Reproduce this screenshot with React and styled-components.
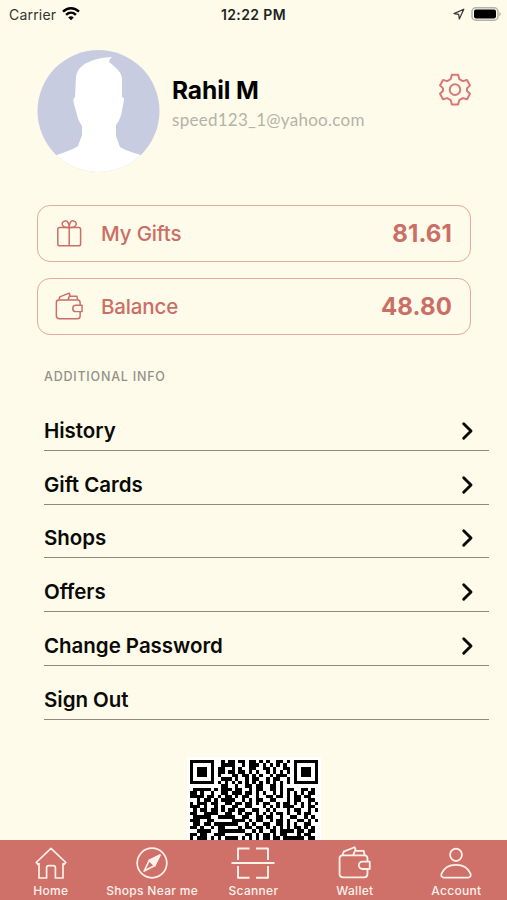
import React from 'react';
import styled, { createGlobalStyle } from 'styled-components';

const GlobalStyles = createGlobalStyle`
  * {
    box-sizing: border-box;
  }
  body {
    margin: 0;
    background-color: #fefbea;
    font-family: Inter, 'Liberation Sans', sans-serif;
  }
`;

const Screen = styled.div`
  display: flex;
  flex-direction: column;
  width: 507px;
  height: 900px;
  overflow: hidden;
  background-color: #fefbea;
`;

const StatusBar = styled.header`
  display: grid;
  grid-template-columns: 1fr auto 1fr;
  align-items: center;
  flex: none;
  height: 28px;
  padding: 0 6px 0 9px;
  font-size: 14px;
  letter-spacing: 0.2px;
  color: #333;
`;

const StatusGroup = styled.div`
  display: flex;
  align-items: center;
  gap: ${(p) => p.$gap}px;
  justify-content: ${(p) => (p.$end ? 'flex-end' : 'flex-start')};
`;

const Clock = styled.div`
  padding-right: 3px;
  font-size: 14px;
  font-weight: 600;
  letter-spacing: 0.4px;
  color: #222;
`;

const Content = styled.main`
  display: flex;
  flex-direction: column;
  flex: 1;
  min-height: 0;
  overflow: hidden;
`;

const Profile = styled.section`
  display: flex;
  flex: none;
  height: 177px;
  padding: 21px 36px 0 37px;
`;

const Avatar = styled.svg`
  flex: none;
  width: 123px;
  height: 123px;
`;

const Person = styled.div`
  flex: 1;
  padding: 26px 0 0 12px;
`;

const Name = styled.h1`
  margin: 0;
  font-size: 24.5px;
  line-height: 30px;
  font-weight: 650;
  letter-spacing: -0.1px;
  color: #000;
`;

const Email = styled.div`
  margin-top: 4px;
  font-family: Lato, sans-serif;
  font-size: 17px;
  line-height: 22px;
  letter-spacing: 0.27px;
  color: #b4b3a8;
`;

const SettingsButton = styled.button`
  align-self: flex-start;
  margin-top: 24px;
  padding: 0;
  border: 0;
  background: none;
  color: #d97777;
  line-height: 0;
`;

const Cards = styled.section`
  display: flex;
  flex-direction: column;
  flex: none;
  gap: 16px;
  padding: 0 36px 0 37px;
`;

const Card = styled.div`
  display: flex;
  align-items: center;
  height: 57px;
  padding: 0 18px 0 17px;
  border: 1px solid #e3a9a4;
  border-radius: 13px;
  color: #cb6e66;
`;

const CardIcon = styled.span`
  display: flex;
  width: 30px;
`;

const CardLabel = styled.span`
  flex: 1;
  padding-left: 16px;
  font-size: 20.5px;
  font-weight: 550;
  letter-spacing: -0.15px;
`;

const Amount = styled.span`
  font-size: 24px;
  font-weight: 650;
  letter-spacing: 0.1px;
`;

const SectionTitle = styled.h2`
  flex: none;
  margin: 33px 0 0 44px;
  height: 29px;
  font-size: 12.5px;
  line-height: 18px;
  font-weight: 550;
  letter-spacing: 0.78px;
  color: #929187;
`;

const Menu = styled.nav`
  flex: none;
  padding: 0 18px 0 44px;
`;

const MenuItem = styled.div`
  display: flex;
  justify-content: space-between;
  align-items: flex-end;
  height: 53.8px;
  padding: 0 16px 5px 0;
  border-bottom: 1.5px solid #8c8a81;
  font-size: 20.5px;
  line-height: 28px;
  font-weight: 600;
  letter-spacing: -0.03px;
  color: #0a0a08;
`;

const Chevron = styled.span`
  display: flex;
  align-items: center;
  height: 28px;
`;

const Code = styled.div`
  align-self: center;
  flex: none;
  margin: 37px 0 0 1px;
  padding: 3px;
  background-color: #fff;
  line-height: 0;
`;

const TabBar = styled.footer`
  display: grid;
  grid-template-columns: repeat(5, 1fr);
  flex: none;
  height: 60px;
  background-color: #cf7069;
`;

const Tab = styled.div`
  display: flex;
  flex-direction: column;
  align-items: center;
  padding: 6px 0 0;
  color: #fff2e9;
`;

const TabLabel = styled.span`
  margin-top: 3px;
  font-size: 12px;
  line-height: 16px;
  font-weight: 500;
  letter-spacing: 0.3px;
  white-space: nowrap;
`;

const Icon = styled.svg`
  flex: none;
  overflow: visible;
  fill: none;
  stroke: currentColor;
  stroke-width: ${(p) => p.$stroke || 1.5};
  stroke-linejoin: round;
`;

function WifiIcon() {
  return (
    <Icon width="18" height="14" viewBox="0 0 18 14" $stroke={2.5} color="#000">
      <path d="M1 4.7C5.6 .1 12.4.1 17 4.7M4.1 7.9C7 5.1 11 5.1 13.9 7.9" />
      <path d="M6.2 10.4Q9 8 11.8 10.4L9 13.2z" fill="currentColor" stroke="none" />
    </Icon>
  );
}

function LocationIcon() {
  return (
    <Icon width="12" height="12" viewBox="0 0 12 12" $stroke={1.2}>
      <path d="M10.8 1.2L1 5.6 5.7 6.3 6.3 11z" />
    </Icon>
  );
}

function BatteryIcon() {
  return (
    <Icon width="30" height="14" viewBox="0 0 30 14" $stroke={1.5}>
      <rect x="1" y=".8" width="26" height="12.4" rx="3.8" stroke="#b5b3a9" />
      <rect x="3" y="2.6" width="22" height="8.8" rx="1.8" fill="#000" stroke="none" />
      <path d="M28.4 4.7v4.6q3-2.3 0-4.6" fill="#b5b3a9" stroke="none" />
    </Icon>
  );
}

function GearIcon() {
  return (
    <Icon width="32" height="33" viewBox="0 0 32 33" $stroke={2}>
      <path d="M12.9 1.8H19.1L20.3 6.1 23.8 8.1 28 7 31 12.4 28 15.4V17.8L31 20.8 28 26.2 23.8 25.1 20.3 27.1 19.1 31.4H12.9L11.7 27.1 8.2 25.1 4 26.2 1 20.8 4 17.8V15.4L1 12.4 4 7 8.2 8.1 11.7 6.1z" />
      <circle cx="16" cy="16.6" r="5.3" />
    </Icon>
  );
}

function GiftIcon() {
  return (
    <Icon width="30" height="30" viewBox="0 0 30 30" $stroke={1.5}>
      <rect x="2.8" y="8.4" width="22.8" height="18.4" rx="1.8" />
      <path d="M14.2 8.4V26.8" />
      <path d="M14.2 8.2C9.5 9.1 6.5 6.8 7.2 4.2 7.9 1.6 11.8.9 13 3.4 13.7 4.8 14.2 6.6 14.2 8.2zM14.2 8.2C18.9 9.1 21.9 6.8 21.2 4.2 20.5 1.6 16.6.9 15.4 3.4 14.7 4.8 14.2 6.6 14.2 8.2z" />
    </Icon>
  );
}

function WalletIcon({ size, stroke }) {
  return (
    <Icon width={size} height={size} viewBox="0 0 30 30" $stroke={stroke}>
      <path d="M26 13.8V11Q26 8.2 23.3 8.2H4Q1.4 8.2 1.4 10.8V24.5Q1.4 27.7 4.6 27.7H23Q26 27.7 26 24.8V20.3" />
      <path d="M28 13.8H21.6A3.25 3.25 0 0 0 21.6 20.3H28Z" />
      <path d="M4 8.2L5 5 14.6 1.1 15.5 2.9 13.5 8.2M14.6 4.3H22.7L23.5 8.2M15 4.3Q14 6 13.5 8.2" />
    </Icon>
  );
}

function ChevronIcon() {
  return (
    <Icon width="11" height="18" viewBox="0 0 11 18" $stroke={2.9}>
      <path d="M1.7 1.7L9 9 1.7 16.3" strokeLinecap="round" />
    </Icon>
  );
}

function HomeIcon() {
  return (
    <Icon width="32" height="34" viewBox="0 0 32 34" $stroke={1.7}>
      <path d="M1.2 16.5L16 2.4 30.8 16.5 29 18.4 28 17.7V32H20.4V21.8Q20.4 19.6 18.3 19.6H13.7Q11.6 19.6 11.6 21.8V32H4V17.7L3 18.4z" />
    </Icon>
  );
}

function CompassIcon() {
  return (
    <Icon width="32" height="34" viewBox="0 0 32 34" $stroke={1.7}>
      <circle cx="16" cy="17" r="14.8" />
      <path d="M23.8 9.2L18.7 19.5 8.2 25.1 13.2 14.5z" />
      <path d="M23.8 9.2L18.7 19.5 13.2 14.5z" fill="currentColor" />
    </Icon>
  );
}

function ScannerIcon() {
  return (
    <Icon width="44" height="34" viewBox="0 0 44 34" $stroke={1.9}>
      <path d="M18.5 2.5H7V14M25 2.5H37V14M7 20V31.7H18.5M37 20V31.7H25" />
      <path d="M.5 17H43.5" />
    </Icon>
  );
}

function AccountIcon() {
  return (
    <Icon width="32" height="34" viewBox="0 0 32 34" $stroke={1.8}>
      <ellipse cx="16" cy="8.8" rx="5.9" ry="6.2" />
      <path d="M4 31.7C1.5 31.7.8 29.8 1.6 27.5 6.5 16 25.5 16 30.4 27.5 31.2 29.8 30.5 31.7 28 31.7z" />
    </Icon>
  );
}

// upper part of the code, the rest is hidden under the tab bar
const codeRows = [
  '#######..#.##.##.##.#.#..##.#.#######',
  '#.....#..####..#.###.#.#.#.#..#.....#',
  '#.###.#.##..#.#..##..##.#..##.#.###.#',
  '#.###.#.##.##.##.#.#..#.#.#.#.#.###.#',
  '#.###.#.#...##.##.#.#..#.###..#.###.#',
  '#.....#..###.#..#.##..#.##..#.#.....#',
  '#######.#.#.#.#.#.#.#.#.#.#.#.#######',
  '.........##..#..##.##..##.#..........',
  '.#####.#.###.##..#.##..##.#.##..##.#.',
  '##.#..#..##.###.##.#.#..#.#.#.#.#.##.',
  '####.##.#.##.#.##..#..##.##.#.##.##..',
  '..#.##.#.####..#.#.##..##...#.##..##.',
  '#.###.##..##.##.##.#.##..#.##.#.#.#.#',
  '###.#..#.#..##..##...#.#.#.###..#.##.',
  '.#.##.##.#.##.##..##..#.#...#.##..#.#',
  '##..####..##..#.##.#.#.#.##.#..#.##..',
  '.#####..#####..##..##.##..#..##..#.#.',
  '###..##.....####.#.##..#.##.#..##.#.#',
  '.##.##.#######..#.#..##..##.#.#..##..',
  '##.#..#.##....#.##.##.#.#.#.#.##.#.#.',
  '..####..########..#.#..##.####.##.##.',
  '##.##..###......##.#.##.#.##...#.##..',
  '#.###.#.#.####.#.#.#.##.##.######.##.',
  '.##.#####.##.####.##..###..##..#.###.',
];

function QrCode() {
  return (
    <svg
      width="128"
      height="83"
      viewBox="0 0 37 24"
      preserveAspectRatio="none"
      shapeRendering="crispEdges"
    >
      {codeRows.map((row, y) =>
        row.split('').map((cell, x) =>
          cell === '#' ? <rect key={`${x}-${y}`} x={x} y={y} width="1" height="1" fill="#000" /> : null
        )
      )}
    </svg>
  );
}

const menuItems = ['History', 'Gift Cards', 'Shops', 'Offers', 'Change Password', 'Sign Out'];

const tabs = [
  { label: 'Home', icon: <HomeIcon /> },
  { label: 'Shops Near me', icon: <CompassIcon /> },
  { label: 'Scanner', icon: <ScannerIcon /> },
  { label: 'Wallet', icon: <WalletIcon size={34} stroke={1.6} /> },
  { label: 'Account', icon: <AccountIcon /> },
];

function App() {
  return (
    <>
      <GlobalStyles />
      <Screen>
        <StatusBar>
          <StatusGroup $gap={6}>
            <span>Carrier</span>
            <WifiIcon />
          </StatusGroup>
          <Clock>12:22 PM</Clock>
          <StatusGroup $gap={6} $end>
            <LocationIcon />
            <BatteryIcon />
          </StatusGroup>
        </StatusBar>

        <Content>
          <Profile>
            <Avatar viewBox="0 0 123 123">
              <clipPath id="round">
                <circle cx="61.5" cy="62" r="61" />
              </clipPath>
              <g clipPath="url(#round)">
                <rect width="123" height="123" fill="#c8cce0" />
                <path
                  fill="#fff"
                  d="M75 8C58 9 41 14 39 28L38 48Q36 49 36.5 53L39 62Q41 72 45 77V86L41 97Q38 100 17 107V123H107V107Q87 101 83 98L79 87V76Q84 70 85 61L87 51Q87 48 85 48V29C84 22 78 18 72 13Q72 10 75 8z"
                />
              </g>
            </Avatar>
            <Person>
              <Name>Rahil M</Name>
              <Email>speed123_1@yahoo.com</Email>
            </Person>
            <SettingsButton aria-label="Settings">
              <GearIcon />
            </SettingsButton>
          </Profile>

          <Cards>
            <Card>
              <CardIcon>
                <GiftIcon />
              </CardIcon>
              <CardLabel>My Gifts</CardLabel>
              <Amount>81.61</Amount>
            </Card>
            <Card>
              <CardIcon>
                <WalletIcon size={29} stroke={1.5} />
              </CardIcon>
              <CardLabel>Balance</CardLabel>
              <Amount>48.80</Amount>
            </Card>
          </Cards>

          <SectionTitle>ADDITIONAL INFO</SectionTitle>
          <Menu>
            {menuItems.map((item) => (
              <MenuItem key={item}>
                {item}
                {item !== 'Sign Out' && (
                  <Chevron>
                    <ChevronIcon />
                  </Chevron>
                )}
              </MenuItem>
            ))}
          </Menu>

          <Code>
            <QrCode />
          </Code>
        </Content>

        <TabBar>
          {tabs.map((tab) => (
            <Tab key={tab.label}>
              {tab.icon}
              <TabLabel>{tab.label}</TabLabel>
            </Tab>
          ))}
        </TabBar>
      </Screen>
    </>
  );
}

export default App;
